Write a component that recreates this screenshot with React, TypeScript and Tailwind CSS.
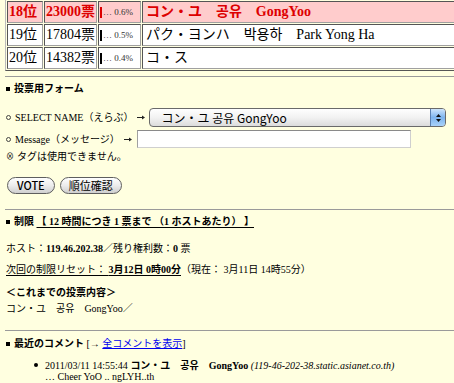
const SERIF = "font-['Liberation_Serif','Noto_Sans_CJK_JP',serif]";

type Rank = {
  rank: string;
  votes: string;
  pct: string;
  name: string;
  top?: boolean;
};

const RANKS: Rank[] = [
  { rank: "18位", votes: "23000票", pct: "0.6%", name: "コン・ユ　공유　GongYoo", top: true },
  { rank: "19位", votes: "17804票", pct: "0.5%", name: "パク・ヨンハ　박용하　Park Yong Ha" },
  { rank: "20位", votes: "14382票", pct: "0.4%", name: "コ・ス" },
];

const cell =
  "border border-t-[#555] border-l-[#555] border-b-[#a0a0a0] border-r-[#a0a0a0] px-[1px] py-[1px] leading-[18px] h-[22px] whitespace-nowrap";

function Square() {
  return <span className="inline-block w-[4px] h-[4px] bg-black mr-[4px] align-middle relative -top-[1px]" />;
}

function RankTable() {
  return (
    <table className="-mt-[1px] border border-t-[#bbb] border-l-[#bbb] border-b-[#555] border-r-[#555] border-separate border-spacing-[1px] w-[620px] ml-[5px] text-[14px]">
      <tbody>
        {RANKS.map((r) => {
          const tone = r.top ? "bg-[#ffcccc] text-[#dd0000] font-bold" : "bg-white text-black";
          return (
            <tr key={r.rank} className={tone}>
              <td className={`${cell} w-[36px]`}>{r.rank}</td>
              <td className={`${cell} w-[53px]`}>{r.votes}</td>
              <td className={`${cell} w-[43px] font-normal`}>
                <span className="flex items-center">
                  <span className={`inline-block w-[2px] h-[11px] ${r.top ? "bg-[#dd0000]" : "bg-black"}`} />
                  <span className="text-[9px] text-[#333] ml-[1px]">… {r.pct}</span>
                </span>
              </td>
              <td className={`${cell} pl-[3px]`}>{r.name}</td>
            </tr>
          );
        })}
      </tbody>
    </table>
  );
}

function Rule() {
  return <div className="h-px bg-[#9a9a9a] ml-[5px]" />;
}

function Circle() {
  return <span className="inline-block w-[5px] h-[5px] rounded-full border border-[#444] mr-[4px]" />;
}

function Arrow() {
  return (
    <svg width="8" height="5" viewBox="0 0 8 5" className="mx-[4px]">
      <path d="M0 2.5 H6" stroke="#222" strokeWidth="1" />
      <path d="M5 0.5 L8 2.5 L5 4.5 Z" fill="#222" />
    </svg>
  );
}

function AquaSelect() {
  return (
    <div className="w-[297px] h-[19px] rounded-[4px] border border-[#6a6a6a] bg-gradient-to-b from-white via-[#f2f2f2] to-[#dcdcdc] flex items-center overflow-hidden">
      <span className="flex-1 pl-[11px] text-[12px] leading-[17px] font-['Noto_Sans_CJK_JP',sans-serif] text-black">
        コン・ユ 공유 GongYoo
      </span>
      <span className="w-[15px] h-full border-l border-[#5a7fb0] bg-gradient-to-b from-[#cfe5fb] via-[#7db4ee] to-[#a9d2fa] flex flex-col items-center justify-center gap-[2px]">
        <svg width="5" height="3" viewBox="0 0 5 3">
          <path d="M2.5 0 L5 3 L0 3 Z" fill="#111" />
        </svg>
        <svg width="5" height="3" viewBox="0 0 5 3">
          <path d="M0 0 L5 0 L2.5 3 Z" fill="#111" />
        </svg>
      </span>
    </div>
  );
}

function AquaButton({ label, bold }: { label: string; bold?: boolean }) {
  return (
    <button
      className={`h-[17px] rounded-full border border-[#5e5e5e] bg-gradient-to-b from-white via-[#ececec] to-[#cfcfcf] text-[11px] leading-[15px] text-black font-['Noto_Sans_CJK_JP',sans-serif] ${
        bold ? "px-[9px] font-medium" : "px-[8px]"
      }`}
    >
      {label}
    </button>
  );
}

function VoteForm() {
  return (
    <div className="pl-[6px]">
      <div className="mt-[6px] h-[12px] leading-[12px] font-bold">
        <Square />
        投票用フォーム
      </div>

      <div className="mt-[13px] flex items-center h-[19px]">
        <Circle />
        <span>SELECT NAME（えらぶ）</span>
        <Arrow />
        <AquaSelect />
      </div>

      <div className="mt-[3px] flex items-center h-[18px]">
        <Circle />
        <span>Message（メッセージ）</span>
        <Arrow />
        <input
          className="ml-[1px] w-[274px] h-[18px] bg-white border border-t-[#8a8a8a] border-l-[#a0a0a0] border-b-[#cfcfcf] border-r-[#cfcfcf] outline-none"
          defaultValue=""
        />
      </div>

      <div className="mt-[3px] h-[11px] leading-[11px] flex items-center">
        <span className="text-[8px] mr-[3px]">⊗</span>
        タグは使用できません。
      </div>

      <div className="mt-[15px] flex gap-[5px] pl-[1px]">
        <AquaButton label="VOTE" bold />
        <AquaButton label="順位確認" />
      </div>
    </div>
  );
}

function LimitInfo() {
  return (
    <div className="pl-[6px]">
      <div className="mt-[6px] h-[12px] leading-[12px] font-bold">
        <Square />
        制限{" "}
        <span className="underline underline-offset-[2px]">【 12 時間につき 1 票まで （1 ホストあたり） 】</span>
      </div>
      <div className="mt-[15px] h-[12px] leading-[12px]">
        ホスト：<b>119.46.202.38</b>／残り権利数：<b>0</b> 票
      </div>
      <div className="mt-[9px] h-[12px] leading-[12px]">
        <span className="underline underline-offset-[2px]">
          次回の制限リセット： <b>3月12日 0時00分</b>
        </span>
        （現在： 3月11日 14時55分）
      </div>
      <div className="mt-[11px] h-[12px] leading-[12px] font-bold">＜これまでの投票内容＞</div>
      <div className="mt-[4px] h-[12px] leading-[12px]">コン・ユ　공유　GongYoo／</div>
    </div>
  );
}

function Comments() {
  return (
    <div className="pl-[6px]">
      <div className="mt-[7px] h-[12px] leading-[12px]">
        <b>
          <Square />
          最近のコメント
        </b>{" "}
        [→ <span className="text-[#0000ee] underline">全コメントを表示</span>]
      </div>
      <ul className="mt-[10px] pl-[39px] leading-[11px]">
        <li className="relative">
          <span className="absolute -left-[11px] top-[3px] w-[4px] h-[4px] rounded-full bg-black" />
          2011/03/11 14:55:44 <b>コン・ユ　공유　GongYoo</b> <i>(119-46-202-38.static.asianet.co.th)</i>
          <br />… Cheer YoO .. ngLYH..th
        </li>
      </ul>
    </div>
  );
}

export default function App() {
  return (
    <div className={`h-screen w-full overflow-hidden bg-[#ffffe0] text-black text-[10px] ${SERIF}`}>
      <RankTable />
      <div className="mt-[5px]">
        <Rule />
      </div>
      <VoteForm />
      <div className="mt-[15px]">
        <Rule />
      </div>
      <LimitInfo />
      <div className="mt-[15px]">
        <Rule />
      </div>
      <Comments />
    </div>
  );
}
